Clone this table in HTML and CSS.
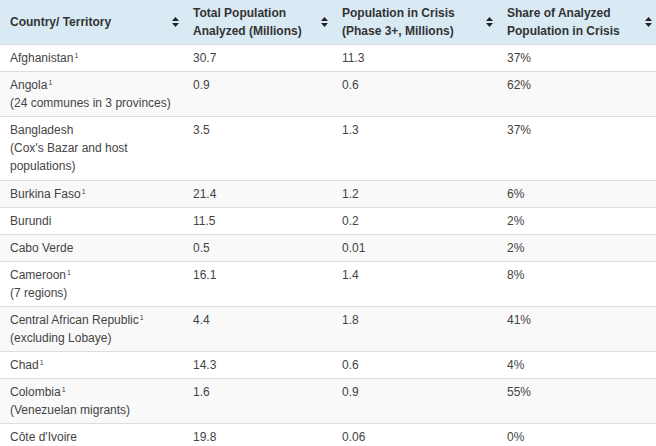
FILE: index.html
```html
<!DOCTYPE html>
<html>
<head>
<meta charset="utf-8">
<link rel="stylesheet" href="styles.css">
</head>
<body>
<table class="data">
  <colgroup>
    <col class="c1"><col class="c2"><col class="c3"><col class="c4">
  </colgroup>
  <thead>
    <tr>
      <th><div class="th"><span>Country/ Territory</span><svg class="sort" viewBox="0 0 7 10"><path d="M3.5 0L7 4H0z M3.5 10L7 6H0z"/></svg></div></th>
      <th><div class="th"><span>Total Population<br>Analyzed (Millions)</span><svg class="sort" viewBox="0 0 7 10"><path d="M3.5 0L7 4H0z M3.5 10L7 6H0z"/></svg></div></th>
      <th><div class="th"><span>Population in Crisis<br>(Phase 3+, Millions)</span><svg class="sort" viewBox="0 0 7 10"><path d="M3.5 0L7 4H0z M3.5 10L7 6H0z"/></svg></div></th>
      <th><div class="th"><span>Share of Analyzed<br>Population in Crisis</span><svg class="sort" viewBox="0 0 7 10"><path d="M3.5 0L7 4H0z M3.5 10L7 6H0z"/></svg></div></th>
    </tr>
  </thead>
  <tbody>
    <tr><td>Afghanistan<sup>1</sup></td><td>30.7</td><td>11.3</td><td>37%</td></tr>
    <tr><td>Angola<sup>1</sup><br>(24 communes in 3 provinces)</td><td>0.9</td><td>0.6</td><td>62%</td></tr>
    <tr class="tall"><td>Bangladesh<br>(Cox's Bazar and host populations)</td><td>3.5</td><td>1.3</td><td>37%</td></tr>
    <tr><td>Burkina Faso<sup>1</sup></td><td>21.4</td><td>1.2</td><td>6%</td></tr>
    <tr><td>Burundi</td><td>11.5</td><td>0.2</td><td>2%</td></tr>
    <tr><td>Cabo Verde</td><td>0.5</td><td>0.01</td><td>2%</td></tr>
    <tr><td>Cameroon<sup>1</sup><br>(7 regions)</td><td>16.1</td><td>1.4</td><td>8%</td></tr>
    <tr><td>Central African Republic<sup>1</sup><br>(excluding Lobaye)</td><td>4.4</td><td>1.8</td><td>41%</td></tr>
    <tr><td>Chad<sup>1</sup></td><td>14.3</td><td>0.6</td><td>4%</td></tr>
    <tr><td>Colombia<sup>1</sup><br>(Venezuelan migrants)</td><td>1.6</td><td>0.9</td><td>55%</td></tr>
    <tr><td>Côte d'Ivoire</td><td>19.8</td><td>0.06</td><td>0%</td></tr>
  </tbody>
</table>
</body>
</html>
```
FILE: styles.css
```css
html, body {
  margin: 0;
  padding: 0;
  background: #fff;
}
.data {
  width: 656px;
  border-collapse: collapse;
  table-layout: fixed;
  font-family: "Liberation Sans", Arial, sans-serif;
  font-size: 12px;
  line-height: 18px;
  color: #444;
}
.c1 { width: 183px; }
.c2 { width: 149px; }
.c3 { width: 165px; }
.c4 { width: 159px; }
.data th {
  background: #d9eaf4;
  color: #333;
  font-weight: bold;
  text-align: left;
  padding: 4px 4px 4px 10px;
  border-bottom: 1px solid #cfdde6;
  vertical-align: middle;
}
.th {
  display: flex;
  align-items: center;
  justify-content: space-between;
}
.sort {
  width: 7px;
  height: 10px;
  fill: #222;
  flex: none;
}
.data td {
  padding: 4px 8px 4px 10px;
  vertical-align: top;
  border-bottom: 1px solid #ddd;
}
.data sup {
  font-size: 7px;
  line-height: 0;
  vertical-align: 4px;
  margin-left: 1px;
}
.data tbody tr.tall td {
  padding-bottom: 5px;
}
.data tbody tr:nth-child(even) td {
  background: #f9f9f9;
}
```
